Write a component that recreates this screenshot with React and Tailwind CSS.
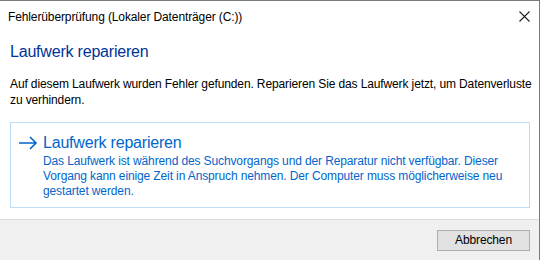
import React from 'react';

function Arrow() {
  return (
    <svg width="20" height="14" viewBox="0 0 20 14" className="shrink-0">
      <path d="M1 7 H18 M12 1 L18 7 L12 13" fill="none" stroke="#0066cc" strokeWidth="1.6" />
    </svg>
  );
}

function CloseIcon() {
  return (
    <svg width="11" height="11" viewBox="0 0 11 11">
      <path d="M0.5 0.5 L10.5 10.5 M10.5 0.5 L0.5 10.5" stroke="#222" strokeWidth="1.1" />
    </svg>
  );
}

export default function App() {
  return (
    <div className="w-[540px] h-[260px] bg-white border-t border-r border-[#7a7a7a] flex flex-col font-['Liberation_Sans',sans-serif] text-[12px] tracking-[-0.12px] text-black">
      {/* Title bar */}
      <div className="h-[31px] flex items-center justify-between pl-[8px] pr-[9px] shrink-0">
        <span className="whitespace-nowrap">Fehlerüberprüfung (Lokaler Datenträger (C:))</span>
        <CloseIcon />
      </div>

      {/* Content */}
      <div className="flex-1 pl-[10px] pr-[9px]">
        <div className="mt-[10px] text-[16px] leading-[20px] tracking-[-0.2px] text-[#003399] whitespace-nowrap">
          Laufwerk reparieren
        </div>
        <p className="mt-[14px] leading-[16px] whitespace-nowrap">
          Auf diesem Laufwerk wurden Fehler gefunden. Reparieren Sie das Laufwerk jetzt, um Datenverluste
          <br />
          zu verhindern.
        </p>
        <div className="mt-[14px] border border-[#bfdcf5] pt-[10px] pb-[8px] pl-[7px]">
          <div className="flex items-center gap-[5px] text-[16px] leading-[20px] tracking-[-0.2px] text-[#0066cc]">
            <Arrow />
            <span className="whitespace-nowrap">Laufwerk reparieren</span>
          </div>
          <p className="mt-[1px] ml-[25px] leading-[15px] text-[#0066cc] whitespace-nowrap">
            Das Laufwerk ist während des Suchvorgangs und der Reparatur nicht verfügbar. Dieser
            <br />
            Vorgang kann einige Zeit in Anspruch nehmen. Der Computer muss möglicherweise neu
            <br />
            gestartet werden.
          </p>
        </div>
      </div>

      {/* Footer */}
      <div className="h-[41px] shrink-0 border-t border-[#dfdfdf] bg-[#f0f0f0] flex items-center justify-end pr-[9px]">
        <button className="w-[93px] h-[21px] border border-[#adadad] bg-[#e1e1e1] text-[12px] leading-none text-black">
          Abbrechen
        </button>
      </div>
    </div>
  );
}
